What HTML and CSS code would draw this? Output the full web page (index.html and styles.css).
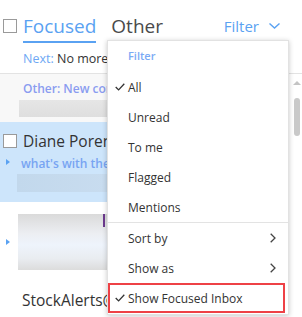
FILE: index.html
```html
<!DOCTYPE html>
<html lang="en">

<head>
    <meta charset="UTF-8">
    <title>Inbox - Filter</title>
    <link rel="stylesheet" href="styles.css">
</head>

<body>

    <div class="mail">
        <!-- Pivot: Focused / Other -->
        <div class="pivot">
            <span class="box"></span>
            <span class="tab active">Focused</span>
            <span class="tab">Other</span>
            <span class="filter">Filter
                <svg width="11" height="6" viewBox="0 0 11 6"><polyline points="0.5,0.5 5.5,5 10.5,0.5" fill="none" stroke="#5aa2f2" stroke-width="1.4"/></svg>
            </span>
        </div>

        <div class="next"><span class="clip"><span class="label">Next:</span> No more</span></div>

        <div class="body">
            <div class="list">
                <div class="other-note">
                    <div class="note clip">Other: New con</div>
                    <div class="blur grey"></div>
                </div>

                <div class="row selected">
                    <div class="line">
                        <span class="box"></span>
                        <span class="from clip">Diane Poren</span>
                    </div>
                    <div class="line">
                        <span class="arrow"></span>
                        <span class="subject clip">what's with the</span>
                    </div>
                    <div class="blur bluish"></div>
                </div>

                <div class="row">
                    <div class="line">
                        <span class="arrow"></span>
                        <div class="blur photo"><span class="mark"></span></div>
                    </div>
                </div>

                <div class="row">
                    <div class="line">
                        <span class="from plain clip">StockAlerts@</span>
                    </div>
                </div>
            </div>

            <div class="scrollbar">
                <span class="up"></span>
                <span class="thumb"></span>
            </div>
        </div>
    </div>

    <!-- Filter menu -->
    <div class="menu">
        <div class="menu-head">Filter</div>
        <div class="item"><span class="tick"><svg width="10" height="8" viewBox="0 0 10 8"><polyline points="0.7,4 3.6,6.9 9.3,0.8" fill="none" stroke="#333" stroke-width="1.3"/></svg></span>All</div>
        <div class="item"><span class="tick"></span>Unread</div>
        <div class="item"><span class="tick"></span>To me</div>
        <div class="item"><span class="tick"></span>Flagged</div>
        <div class="item"><span class="tick"></span>Mentions</div>
        <div class="item sep"><span class="tick"></span>Sort by<span class="more"><svg width="6" height="10" viewBox="0 0 6 10"><polyline points="0.7,0.7 5,5 0.7,9.3" fill="none" stroke="#444" stroke-width="1.3"/></svg></span></div>
        <div class="item"><span class="tick"></span>Show as<span class="more"><svg width="6" height="10" viewBox="0 0 6 10"><polyline points="0.7,0.7 5,5 0.7,9.3" fill="none" stroke="#444" stroke-width="1.3"/></svg></span></div>
        <div class="item marked"><span class="tick"><svg width="10" height="8" viewBox="0 0 10 8"><polyline points="0.7,4 3.6,6.9 9.3,0.8" fill="none" stroke="#333" stroke-width="1.3"/></svg></span>Show Focused Inbox</div>
    </div>

</body>

</html>
```

FILE: styles.css
```css
body {
    margin: 0;
    font-family: 'Open Sans', 'Noto Sans', sans-serif;
    color: #333;
    background: #fff;
    width: 302px;
    height: 317px;
    overflow: hidden;
    position: relative;
}

/* text that runs on under the menu is cut at its left edge */
.clip {
    display: block;
    overflow: hidden;
    white-space: nowrap;
}

.box {
    width: 12px;
    height: 12px;
    border: 1px solid #9a9a9a;
    background: #fff;
    flex: none;
}

/* pivot */
.pivot {
    display: flex;
    align-items: center;
    padding: 13px 0 0 3px;
}

.pivot .box {
    margin-right: 6px;
    margin-bottom: 4px;
}

.tab {
    font-size: 19px;
    line-height: 26px;
    padding-bottom: 2px;
    border-bottom: 2px solid transparent;
    margin-right: 15px;
    color: #4a4a4a;
}

.tab.active {
    color: #5aa2f2;
    border-bottom-color: #5aa2f2;
}

.filter {
    margin-left: auto;
    margin-right: 22px;
    margin-bottom: 4px;
    font-size: 15px;
    color: #5aa2f2;
    display: flex;
    align-items: center;
    gap: 10px;
}

.next {
    display: flex;
    font-size: 12.5px;
    line-height: 16px;
    padding: 8px 0 6px 23px;
    border-bottom: 1px solid #e3e3e3;
}

.next .clip {
    max-width: 84px;
}

.next .label {
    color: #6ea8f4;
}

/* list */
.body {
    display: flex;
}

.list {
    flex: 1;
    min-width: 0;
    overflow: hidden;
}

.other-note {
    background: #f8f8f8;
    padding: 7px 0 5px 23px;
}

.note {
    font-size: 12px;
    line-height: 16px;
    color: #8a9cf0;
    font-weight: 600;
    max-width: 86px;
}

.blur {
    width: 90px;
}

.blur.grey {
    margin: 3px 0 0 -4px;
    height: 17px;
    background: linear-gradient(#e6e6e6, #dedede);
}

.row {
    padding: 10px 0 10px 3px;
}

.row.selected {
    background: #cde5fb;
    padding-top: 9px;
}

.line {
    display: flex;
    align-items: center;
}

.row .box {
    margin-right: 6px;
}

.from {
    font-size: 15.5px;
    line-height: 20px;
    max-width: 85px;
}

.from.plain {
    margin-left: 19px;
}

.arrow {
    width: 0;
    height: 0;
    border-top: 3px solid transparent;
    border-bottom: 3px solid transparent;
    border-left: 4px solid #5aa2f2;
    margin: 0 11px 0 3px;
    flex: none;
}

.subject {
    font-size: 12px;
    line-height: 16px;
    color: #78a4f2;
    font-weight: 600;
    margin-top: 5px;
    max-width: 86px;
}

.blur.bluish {
    margin: 2px 0 0 14px;
    height: 18px;
    background: linear-gradient(90deg, #c2d8ec, #c8dcef);
}

.row:nth-child(3) {
    padding-top: 12px;
}

.blur.photo {
    margin-left: -3px;
    height: 56px;
    position: relative;
    background: linear-gradient(#dadada, #eceef2 35%, #eef4fc 55%, #e9ecf0 80%, #dcdcdc);
}

.blur.photo .mark {
    position: absolute;
    right: 3px;
    top: 0;
    width: 2px;
    height: 13px;
    background: #6d3a8e;
}

.scrollbar {
    width: 13px;
    flex: none;
    display: flex;
    flex-direction: column;
    align-items: center;
    padding-top: 7px;
    padding-left: 2px;
    box-sizing: border-box;
}

.scrollbar .up {
    width: 0;
    height: 0;
    border-left: 4px solid transparent;
    border-right: 4px solid transparent;
    border-bottom: 4px solid #c4c4c4;
}

.scrollbar .thumb {
    margin-top: 13px;
    width: 6px;
    height: 38px;
    border-radius: 3px;
    background: #c9c9c9;
}

/* filter menu */
.menu {
    position: absolute;
    left: 107px;
    top: 40px;
    width: 182px;
    height: 275px;
    box-sizing: border-box;
    background: #fff;
    border: 1px solid #e2e2e2;
    box-shadow: 0 1px 5px rgba(0, 0, 0, 0.22);
    font-size: 12px;
}

.menu-head {
    padding: 7px 0 8px 20px;
    line-height: 16px;
    font-size: 11px;
    font-weight: 600;
    color: #7aaaf5;
}

.item {
    display: flex;
    align-items: center;
    height: 30px;
    box-sizing: border-box;
    white-space: nowrap;
}

.tick {
    width: 20px;
    flex: none;
    display: flex;
    padding-left: 7px;
    box-sizing: border-box;
}

.item.sep {
    border-top: 1px solid #e3e3e3;
    height: 31px;
}

.more {
    margin-left: auto;
    margin-right: 12px;
    display: flex;
}

.item.marked {
    border: 2px solid #ee4146;
    margin-right: 3px;
}

.item.marked .tick {
    padding-left: 5px;
    width: 18px;
}
```
